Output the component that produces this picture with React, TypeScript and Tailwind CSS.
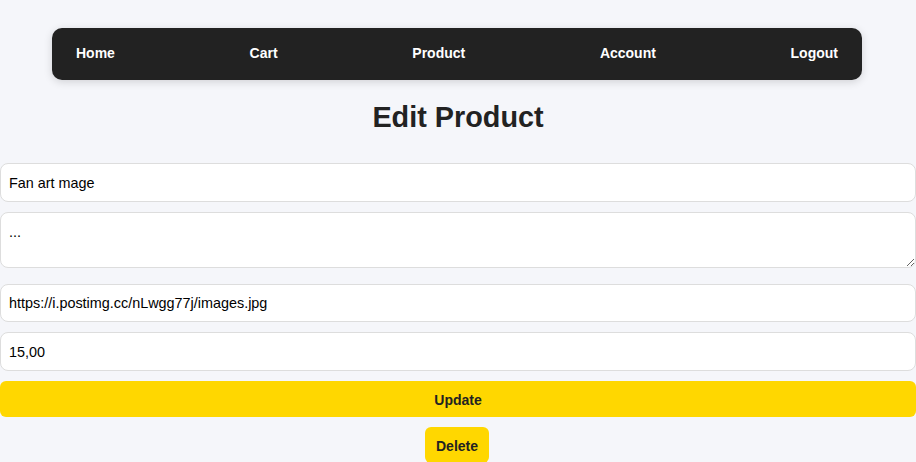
import React, { useState } from "react";

export default function App() {
  const [form, setForm] = useState({
    name: "Fan art mage",
    description: "...",
    image: "https://i.postimg.cc/nLwgg77j/images.jpg",
    price: "15,00",
  });

  const handleChange = (
    e: React.ChangeEvent<HTMLInputElement | HTMLTextAreaElement>
  ) => {
    const { name, value } = e.target;
    setForm((prev) => ({ ...prev, [name]: value }));
  };

  return (
    <div className="min-h-screen bg-[#f5f6fa] font-['Liberation_Sans',Arial,sans-serif] text-[#222]">
      {/* Navbar */}
      <div className="pt-[28px]">
        <nav className="ml-[52px] flex h-[52px] w-[810px] items-center justify-between rounded-[10px] bg-[#222] px-6 pb-[2px] shadow-[0_2px_8px_rgba(0,0,0,0.15)]">
          <a className="text-[14px] font-bold text-white">Home</a>
          <a className="text-[14px] font-bold text-white">Cart</a>
          <a className="text-[14px] font-bold text-white">Product</a>
          <a className="text-[14px] font-bold text-white">Account</a>
          <a className="text-[14px] font-bold text-white">Logout</a>
        </nav>
      </div>

      <h1 className="mt-[19px] mb-[28px] text-center text-[28.8px] leading-[36px] font-bold text-[#222]">
        Edit Product
      </h1>

      <form className="flex flex-col">
        <input
          name="name"
          value={form.name}
          onChange={handleChange}
          className="mb-[10px] h-[39px] w-full rounded-[8px] border border-[#ddd] bg-white px-2 text-[14.4px] text-black outline-none"
        />
        <textarea
          name="description"
          value={form.description}
          onChange={handleChange}
          className="mb-[16px] h-[56px] w-full rounded-[8px] border border-[#ddd] bg-white px-2 py-[9px] text-[14.4px] text-black outline-none"
        />
        <input
          name="image"
          value={form.image}
          onChange={handleChange}
          className="mb-[10px] h-[38px] w-full rounded-[8px] border border-[#ddd] bg-white px-2 text-[14.4px] text-black outline-none"
        />
        <input
          name="price"
          value={form.price}
          onChange={handleChange}
          className="mb-[10px] h-[39px] w-full rounded-[8px] border border-[#ddd] bg-white px-2 text-[14.4px] text-black outline-none"
        />
        <button
          type="button"
          className="mb-[10px] h-[36px] w-full rounded-[6px] bg-[#ffd700] pt-[2px] text-[14px] font-bold text-[#222]"
        >
          Update
        </button>
        <div className="flex justify-center pr-[2px]">
          <button
            type="button"
            className="h-[36px] rounded-[6px] bg-[#ffd700] px-[11px] pt-[2px] text-[14px] font-bold text-[#222]"
          >
            Delete
          </button>
        </div>
      </form>
    </div>
  );
}
